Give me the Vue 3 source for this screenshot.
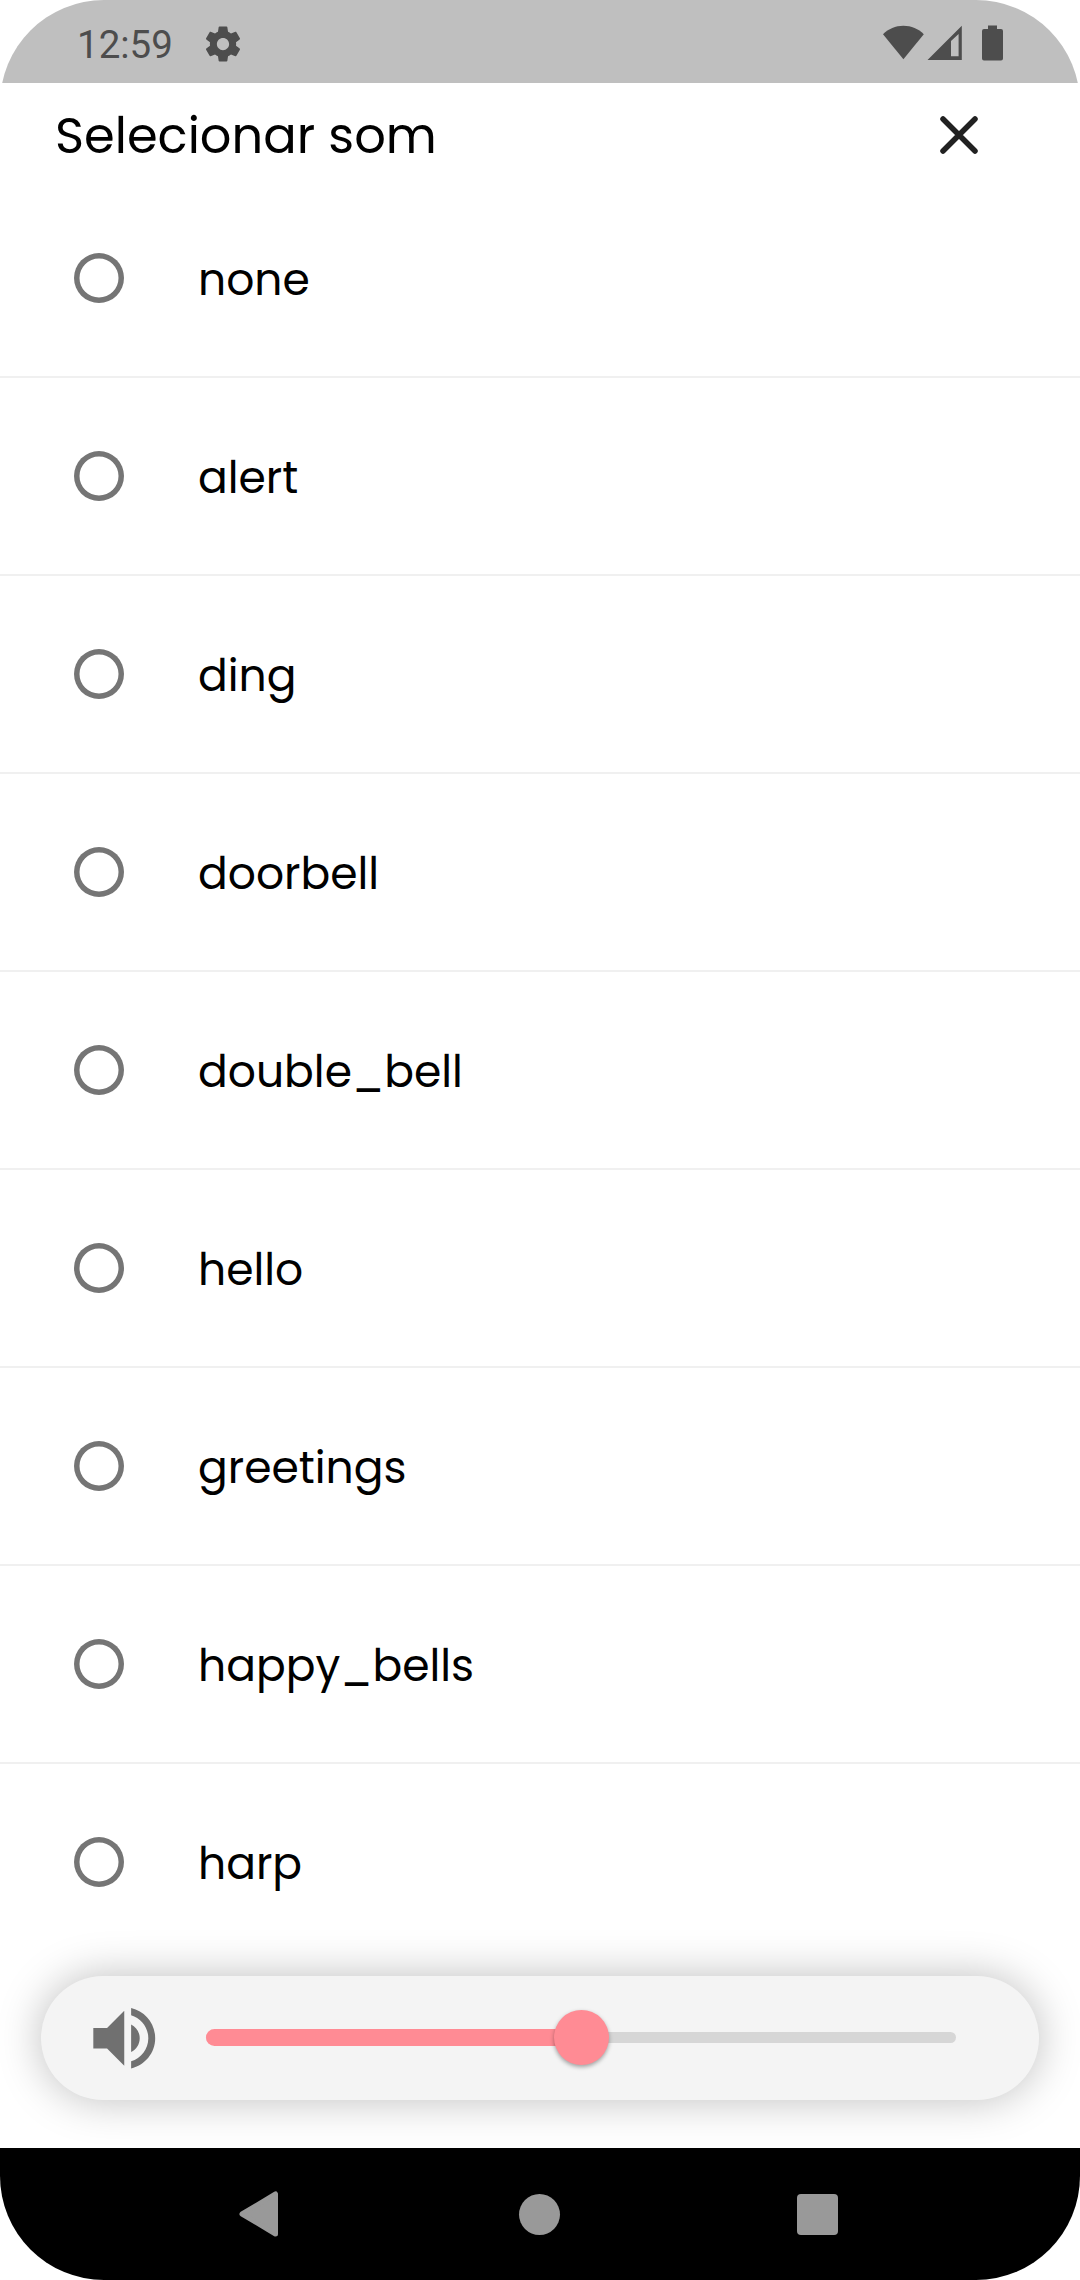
<script setup>
import { ref } from 'vue'

const sounds = [
  'none',
  'alert',
  'ding',
  'doorbell',
  'double_bell',
  'hello',
  'greetings',
  'happy_bells',
  'harp',
]
const volume = ref(50)
</script>

<template>
  <div class="screen">
    <header class="status">
      <span class="clock">12:59</span>
      <svg class="gear" viewBox="0 0 24 24" width="42" height="42">
        <path d="M19.43 12.98c.04-.32.07-.64.07-.98s-.03-.66-.07-.98l2.11-1.65c.19-.15.24-.42.12-.64l-2-3.46c-.12-.22-.39-.3-.61-.22l-2.49 1c-.52-.4-1.08-.73-1.69-.98l-.38-2.65C14.46 2.18 14.25 2 14 2h-4c-.25 0-.46.18-.49.42l-.38 2.65c-.61.25-1.17.59-1.69.98l-2.49-1c-.23-.09-.49 0-.61.22l-2 3.46c-.13.22-.07.49.12.64l2.11 1.65c-.04.32-.07.65-.07.98s.03.66.07.98l-2.11 1.65c-.19.15-.24.42-.12.64l2 3.46c.12.22.39.3.61.22l2.49-1c.52.4 1.08.73 1.69.98l.38 2.65c.03.24.24.42.49.42h4c.25 0 .46-.18.49-.42l.38-2.65c.61-.25 1.17-.59 1.69-.98l2.49 1c.23.09.49 0 .61-.22l2-3.46c.12-.22.07-.49-.12-.64l-2.11-1.65zM12 15.5c-1.93 0-3.5-1.57-3.5-3.5s1.57-3.5 3.5-3.5 3.5 1.57 3.5 3.5-1.57 3.5-3.5 3.5z" />
      </svg>
      <svg class="indicators" viewBox="0 0 121 36" width="121" height="36">
        <path d="M0 9.3C5.5 3.8 12.5.8 20.4.8S35.4 3.8 40.8 9.3L20.4 34.3Z" />
        <path fill-rule="evenodd" d="M44.5 35L78.8.8V35ZM68 16V31.3H75.6V9Z" />
        <path d="M105 .5h9V4h4q2 0 2 2v27.500q0 2-2 2h-17q-2 0-2-2V6q0-2 2-2h4Z" />
      </svg>
    </header>

    <div class="titlebar">
      <h1>Selecionar som</h1>
      <svg class="close" viewBox="0 0 40 40" width="40" height="40">
        <path d="M4 4L36 36M36 4L4 36" />
      </svg>
    </div>

    <main class="list">
      <label v-for="sound in sounds" :key="sound" class="row">
        <span class="radio"></span>
        <span class="name">{{ sound }}</span>
      </label>
    </main>

    <section class="volume">
      <svg class="speaker" viewBox="0 0 24 24" width="82.5" height="82.5">
        <path d="M3 9v6h4l5 5V4L7 9H3zm13.5 3c0-1.77-1.02-3.29-2.5-4.03v8.05c1.48-.73 2.5-2.25 2.5-4.02zM14 3.23v2.06c2.89.86 5 3.54 5 6.71s-2.11 5.85-5 6.71v2.06c4.01-.91 7-4.49 7-8.77s-2.99-7.86-7-8.77z" />
      </svg>
      <div class="slider">
        <div class="active" :style="{ width: volume + '%' }"></div>
        <div class="thumb" :style="{ left: volume + '%' }"></div>
      </div>
    </section>

    <nav class="navbar">
      <svg viewBox="0 0 40 46" width="40" height="46">
        <path class="back" d="M36.5 3V43L3 23Z" />
      </svg>
      <span class="home"></span>
      <span class="recent"></span>
    </nav>
  </div>
</template>

<style>
body {
  margin: 0;
  background: #fff;
}
</style>

<style scoped>
.screen {
  width: 1080px;
  height: 2280px;
  display: flex;
  flex-direction: column;
  background: #fff;
  border-radius: 104px;
  overflow: hidden;
  font-family: Poppins, Inter, sans-serif;
  font-feature-settings: 'cv11';
  color: #000;
}
.status {
  height: 83px;
  flex: none;
  box-sizing: border-box;
  padding: 0 76px 0 77px;
  display: flex;
  align-items: center;
  background: #bfbfbf;
}
.status svg {
  fill: #4d4d4d;
}
.clock {
  font: 38.5px/44px Roboto, sans-serif;
  color: #4d4d4d;
  width: 125px;
  padding-top: 6px;
}
.gear {
  margin-top: 4px;
}
.indicators {
  margin-left: auto;
  margin-top: 3px;
}
.titlebar {
  height: 97px;
  flex: none;
  box-sizing: border-box;
  padding: 0 101px 0 55px;
  display: flex;
  justify-content: space-between;
  align-items: flex-start;
}
h1 {
  margin: 23px 0 0;
  font-size: 49.5px;
  line-height: 60px;
  font-weight: 400;
  white-space: nowrap;
}
.close {
  margin-top: 31.5px;
}
.close path {
  stroke: #212121;
  stroke-width: 5.5;
  stroke-linecap: round;
}
.list {
  flex: none;
}
.row {
  height: 198px;
  box-sizing: border-box;
  border-bottom: 2px solid #f0f0f0;
  padding-left: 74px;
  display: flex;
  align-items: center;
}
.row:last-child {
  border-bottom-color: transparent;
}
.radio {
  width: 50px;
  height: 50px;
  box-shadow: inset 0 0 0 5.5px #757575;
  border-radius: 50%;
}
.name {
  margin-left: 74px;
  padding-top: 4px;
  font-size: 44px;
  line-height: 60px;
  white-space: nowrap;
}
.volume {
  flex: none;
  box-sizing: border-box;
  margin: 14px 41px 48px;
  height: 124px;
  padding: 0 83px 0 41.5px;
  border-radius: 62px;
  background: #f4f4f4;
  box-shadow: 0 0 44px rgba(0, 0, 0, 0.26);
  display: flex;
  align-items: center;
}
.speaker {
  fill: #707070;
  flex: none;
}
.slider {
  position: relative;
  flex: 1;
  height: 11px;
  margin: -1px 0 0 41px;
  border-radius: 6px;
  background: #d6d6d6;
}
.active {
  position: absolute;
  left: 0;
  top: -3px;
  height: 17px;
  border-radius: 9px 0 0 9px;
  background: #ff8b94;
}
.thumb {
  position: absolute;
  top: -22px;
  width: 55px;
  height: 55px;
  margin-left: -27.5px;
  border-radius: 50%;
  background: #ff8b94;
  box-shadow: 0 2px 4px rgba(0, 0, 0, 0.35);
}
.navbar {
  position: relative;
  flex: none;
  height: 132px;
  box-sizing: border-box;
  padding: 0 242px 0 238.5px;
  display: flex;
  align-items: center;
  justify-content: space-between;
  background: #000;
}
.back {
  fill: #999;
  stroke: #999;
  stroke-width: 5;
  stroke-linejoin: round;
}
.home {
  width: 41px;
  height: 41px;
  margin-left: 4px;
  border-radius: 50%;
  background: #999;
}
.recent {
  width: 41px;
  height: 41px;
  border-radius: 4px;
  background: #999;
}
</style>
